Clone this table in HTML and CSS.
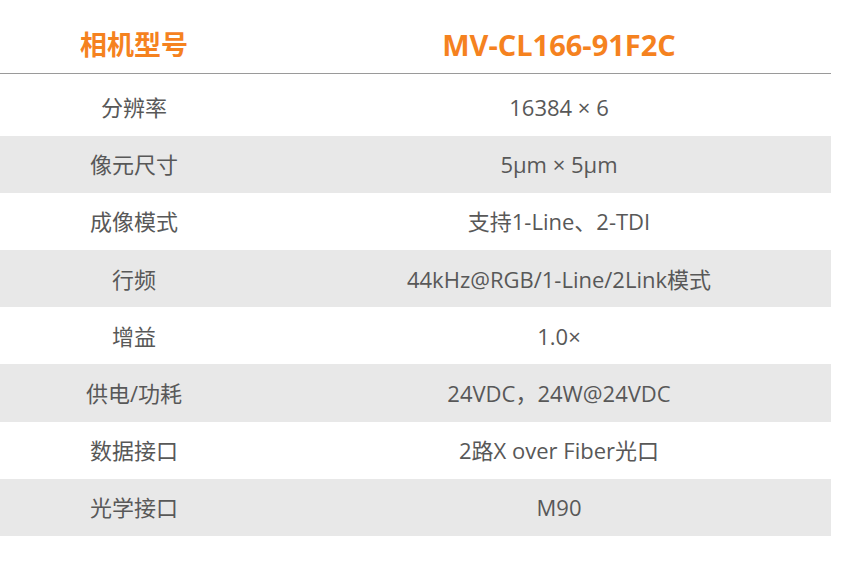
FILE: index.html
```html
<!DOCTYPE html>
<html lang="zh-CN">
<head>
<meta charset="utf-8">
<title>MV-CL166-91F2C</title>
<link rel="stylesheet" href="styles.css">
</head>
<body>
<div class="spec">
  <div class="spec-head">
    <div class="cell key">相机型号</div>
    <div class="cell val">MV-CL166-91F2C</div>
  </div>
  <div class="spec-body">
    <div class="row"><div class="cell key">分辨率</div><div class="cell val">16384 × 6</div></div>
    <div class="row alt"><div class="cell key">像元尺寸</div><div class="cell val">5μm × 5μm</div></div>
    <div class="row"><div class="cell key">成像模式</div><div class="cell val">支持1-Line、2-TDI</div></div>
    <div class="row alt"><div class="cell key">行频</div><div class="cell val">44kHz@RGB/1-Line/2Link模式</div></div>
    <div class="row"><div class="cell key">增益</div><div class="cell val">1.0×</div></div>
    <div class="row alt"><div class="cell key">供电/功耗</div><div class="cell val">24VDC，24W@24VDC</div></div>
    <div class="row"><div class="cell key">数据接口</div><div class="cell val">2路X over Fiber光口</div></div>
    <div class="row alt"><div class="cell key">光学接口</div><div class="cell val">M90</div></div>
  </div>
</div>
</body>
</html>
```

FILE: styles.css
```css
html, body {
  margin: 0;
  padding: 0;
  background: #ffffff;
}

body {
  font-family: "Open Sans", "Noto Sans CJK SC", sans-serif;
  color: #585858;
}

.spec {
  width: 831px;
}

.spec-head {
  display: grid;
  grid-template-columns: 268px 1fr;
  align-items: center;
  height: 74px;
  padding-top: 16px;
  box-sizing: border-box;
  border-bottom: 1.5px solid #9a9a9a;
  color: #f5821f;
  font-weight: 700;
  font-size: 29px;
  line-height: 1;
}

.spec-body {
  margin-top: 4.5px;
}

.row {
  display: grid;
  grid-template-columns: 268px 1fr;
  align-items: center;
  height: 57.2px;
  font-size: 22px;
  line-height: 1;
}

.row.alt {
  background: #e8e8e8;
}

.cell {
  text-align: center;
  white-space: nowrap;
}

.cell.val {
  padding-left: 19px;
}

.spec-head .cell.key {
  font-size: 27px;
}
```
